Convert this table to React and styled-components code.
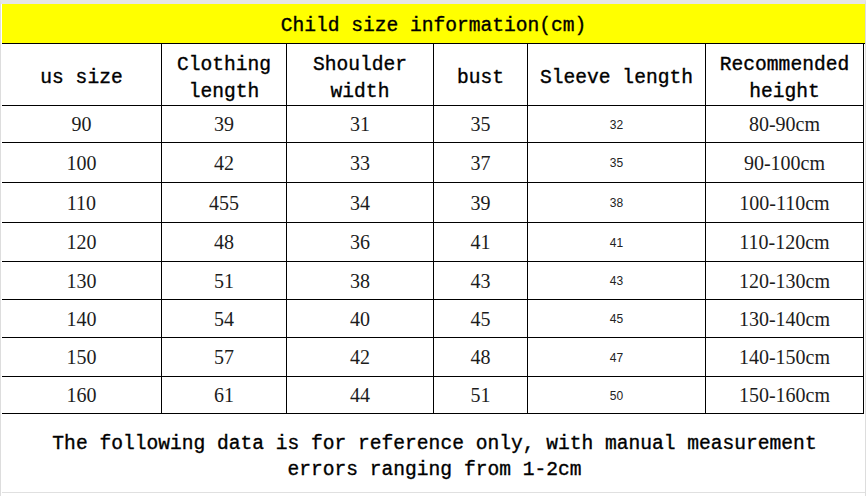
import React from 'react';
import styled, { createGlobalStyle } from 'styled-components';

const columns = [160, 125, 147, 94, 178, 158];

const headers = [
  ['us size'],
  ['Clothing', 'length'],
  ['Shoulder', 'width'],
  ['bust'],
  ['Sleeve length'],
  ['Recommended', 'height'],
];

const rows = [
  { size: '90', length: '39', shoulder: '31', bust: '35', sleeve: '32', height: '80-90cm', h: 37 },
  { size: '100', length: '42', shoulder: '33', bust: '37', sleeve: '35', height: '90-100cm', h: 40 },
  { size: '110', length: '455', shoulder: '34', bust: '39', sleeve: '38', height: '100-110cm', h: 40 },
  { size: '120', length: '48', shoulder: '36', bust: '41', sleeve: '41', height: '110-120cm', h: 39 },
  { size: '130', length: '51', shoulder: '38', bust: '43', sleeve: '43', height: '120-130cm', h: 38 },
  { size: '140', length: '54', shoulder: '40', bust: '45', sleeve: '45', height: '130-140cm', h: 38 },
  { size: '150', length: '57', shoulder: '42', bust: '48', sleeve: '47', height: '140-150cm', h: 39 },
  { size: '160', length: '61', shoulder: '44', bust: '51', sleeve: '50', height: '150-160cm', h: 37 },
];

export default function App() {
  return (
    <>
      <GlobalStyle />
      <Sheet>
        <TitleBar>Child size information(cm)</TitleBar>
        <Grid>
          {headers.map((lines, i) => (
            <HeadCell key={i}>
              {lines.map((line) => (
                <span key={line}>{line}</span>
              ))}
            </HeadCell>
          ))}
          {rows.map((row) => (
            <React.Fragment key={row.size}>
              <Cell $h={row.h}>{row.size}</Cell>
              <Cell $h={row.h}>{row.length}</Cell>
              <Cell $h={row.h}>{row.shoulder}</Cell>
              <Cell $h={row.h}>{row.bust}</Cell>
              <SleeveCell $h={row.h}>{row.sleeve}</SleeveCell>
              <Cell $h={row.h}>{row.height}</Cell>
            </React.Fragment>
          ))}
        </Grid>
        <Footer>
          <span>The following data is for reference only, with manual measurement</span>
          <span>errors ranging from 1-2cm</span>
        </Footer>
      </Sheet>
    </>
  );
}

const GlobalStyle = createGlobalStyle`
  html, body {
    margin: 0;
    padding: 0;
    background: #ffffff;
  }
  * {
    box-sizing: border-box;
  }
`;

const Sheet = styled.div`
  width: 866px;
  height: 496px;
  border-top: 4px solid #e6e6e6;
  border-left: 1px solid #dddddd;
  border-right: 1px solid #dddddd;
  padding-left: 1px;
  background: #ffffff;
`;

const monoText = `
  font-family: 'Liberation Mono', monospace;
  font-weight: normal;
  font-size: 19.6px;
  color: #000000;
  -webkit-text-stroke: 0.35px #000000;
`;

const TitleBar = styled.div`
  ${monoText}
  height: 40px;
  padding-top: 4px;
  background: #ffff00;
  border-bottom: 1px solid #000000;
  display: flex;
  align-items: center;
  justify-content: center;
`;

const Grid = styled.div`
  display: grid;
  grid-template-columns: ${columns.map((c) => `${c}px`).join(' ')};
  width: 862px;
`;

const HeadCell = styled.div`
  ${monoText}
  height: 62px;
  display: flex;
  flex-direction: column;
  align-items: center;
  justify-content: center;
  padding-top: 8px;
  border-bottom: 1px solid #000000;
  border-right: 1px solid #000000;
  line-height: 27px;
`;

const Cell = styled.div`
  height: ${(p) => p.$h}px;
  display: flex;
  align-items: center;
  justify-content: center;
  padding-top: 1px;
  border-bottom: 1px solid #000000;
  border-right: 1px solid #000000;
  font-family: 'Liberation Serif', serif;
  font-size: 20px;
  color: #1c1c1c;
`;

const SleeveCell = styled(Cell)`
  font-family: 'Liberation Sans', sans-serif;
  font-size: 12px;
  color: #222222;
`;

const Footer = styled.div`
  ${monoText}
  height: 79px;
  display: flex;
  flex-direction: column;
  align-items: center;
  justify-content: center;
  padding-top: 7px;
  padding-left: 2px;
  border-bottom: 1px solid #e0e0e0;
  line-height: 26px;
`;
